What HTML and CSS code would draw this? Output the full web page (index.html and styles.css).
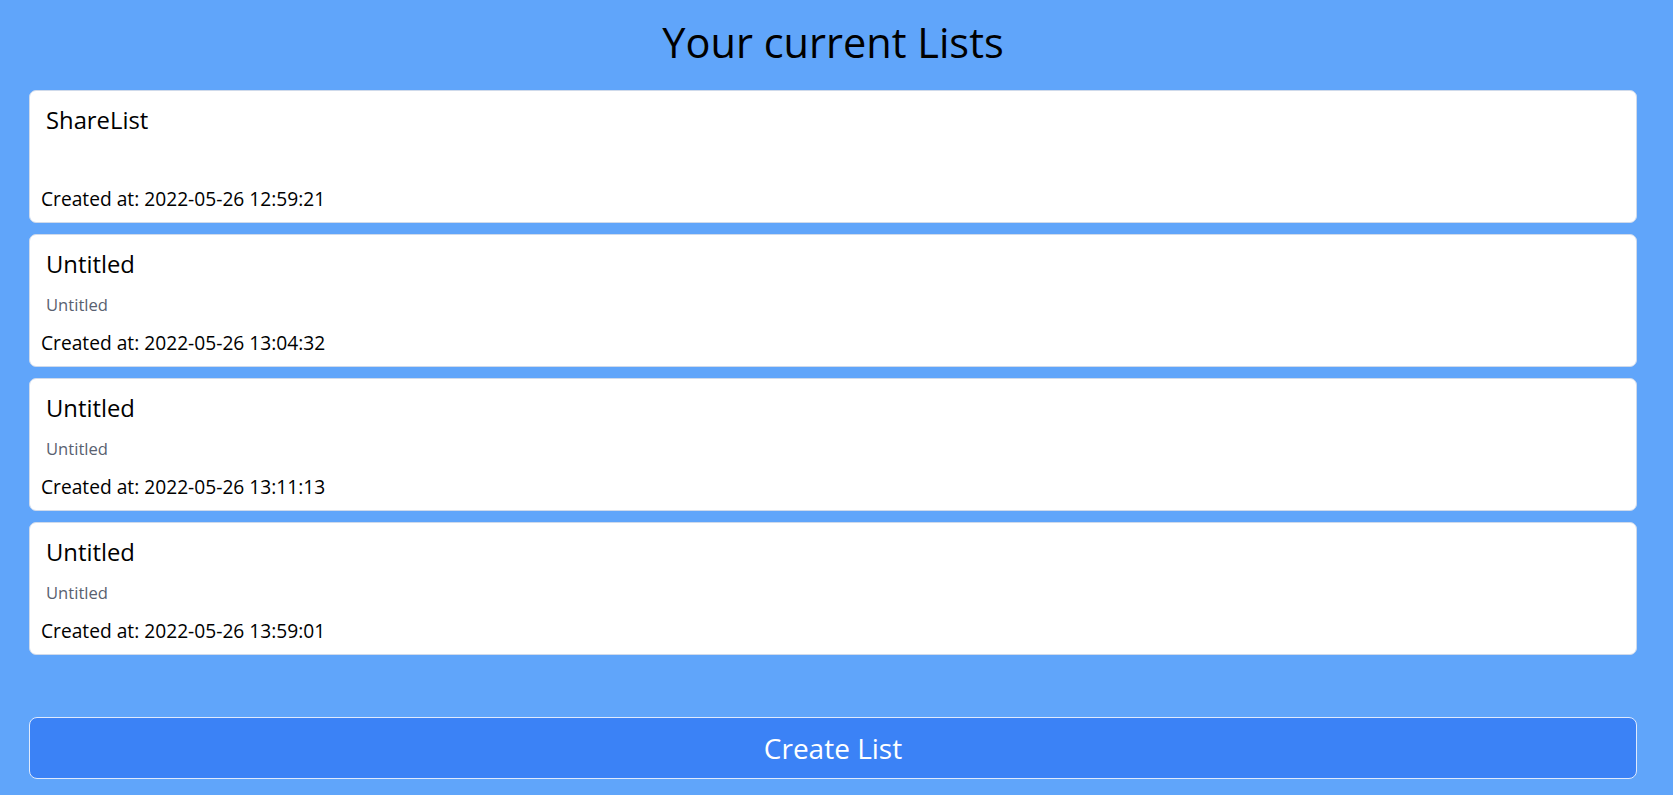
FILE: index.html
```html
<!DOCTYPE html>
<html lang="en">
<head>
<meta charset="utf-8">
<title>Your current Lists</title>
<link rel="stylesheet" href="styles.css">
</head>
<body>
<main class="page">
  <h1 class="page-title">Your current Lists</h1>
  <section class="lists">
    <article class="card">
      <h2 class="card-title">ShareList</h2>
      <p class="card-desc"></p>
      <p class="card-date">Created at: 2022-05-26 12:59:21</p>
    </article>
    <article class="card">
      <h2 class="card-title">Untitled</h2>
      <p class="card-desc">Untitled</p>
      <p class="card-date">Created at: 2022-05-26 13:04:32</p>
    </article>
    <article class="card">
      <h2 class="card-title">Untitled</h2>
      <p class="card-desc">Untitled</p>
      <p class="card-date">Created at: 2022-05-26 13:11:13</p>
    </article>
    <article class="card">
      <h2 class="card-title">Untitled</h2>
      <p class="card-desc">Untitled</p>
      <p class="card-date">Created at: 2022-05-26 13:59:01</p>
    </article>
  </section>
  <div class="actions">
    <button class="create-btn" type="button">Create List</button>
  </div>
</main>
</body>
</html>
```

FILE: styles.css
```css
html, body {
  margin: 0;
  padding: 0;
}

body {
  background: #60a5fa;
  font-family: "Open Sans", "Noto Sans", "Liberation Sans", sans-serif;
  color: #000;
}

.page {
  display: flex;
  flex-direction: column;
  padding: 0 36px 16px 29px;
}

.page-title {
  margin: 0 0 20px 0;
  padding-top: 14px;
  font-size: 41.5px;
  line-height: 56px;
  font-weight: 400;
  text-align: center;
}

.lists {
  display: flex;
  flex-direction: column;
  gap: 11px;
}

.card {
  box-sizing: border-box;
  height: 133px;
  background: #fff;
  border: 1px solid #cfdaeb;
  border-radius: 7px;
  padding: 13px 10px 0 11px;
  display: flex;
  flex-direction: column;
}

.card-title {
  margin: 0;
  padding-left: 5px;
  font-size: 23.8px;
  line-height: 32px;
  font-weight: 400;
}

.card-desc {
  margin: 13px 0 0 0;
  padding-left: 5px;
  height: 24px;
  font-size: 16.6px;
  line-height: 24px;
  color: #596170;
}

.card-date {
  margin: 13px 0 0 0;
  font-size: 19.2px;
  line-height: 26px;
}

.actions {
  margin-top: 62px;
  display: flex;
}

.create-btn {
  flex: 1;
  box-sizing: border-box;
  height: 62px;
  background: #3b82f6;
  border: 1.5px solid #dfeafd;
  border-radius: 8px;
  color: #fff;
  font-family: "Open Sans", "Noto Sans", "Liberation Sans", sans-serif;
  font-size: 28px;
  font-weight: 400;
  display: flex;
  align-items: center;
  justify-content: center;
  padding: 0;
}
```
